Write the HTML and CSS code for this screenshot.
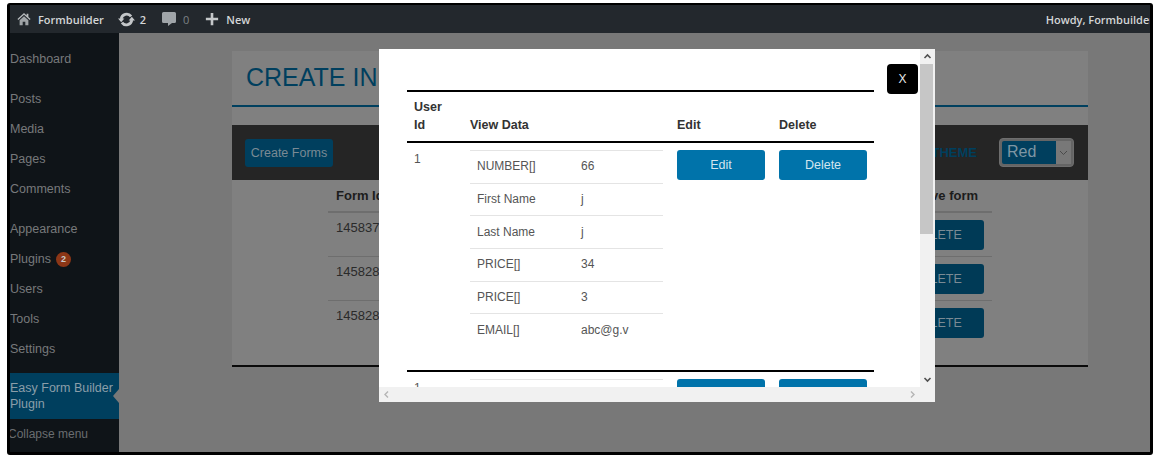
FILE: index.html
```html
<!DOCTYPE html>
<html lang="en">
<head>
    <meta charset="UTF-8">
    <title>Easy Form Builder Plugin</title>
    <link rel="stylesheet" href="styles.css">
</head>
<body>

<div class="frame">
    <div class="topbar">
        <div class="bar-item bar-site">
            <svg class="bar-icon" viewBox="0 0 16 16"><path fill="#b9bcbe" d="M8 1 0.5 8l1 1L8 3l6.500 6 1-1-2.500-2.300V2h-2v1.900z"/><path fill="#a0a4a7" d="M3 9.500 8 4.800l5 4.700V15H9.500v-4h-3v4H3z"/></svg>
            <span>Formbuilder</span>
        </div>
        <div class="bar-item bar-updates">
            <svg class="bar-icon-wide" viewBox="0 0 16 16"><path fill="none" stroke="#c4c7c9" stroke-width="2.600" d="M3 7.500a5.200 5.200 0 0 1 9.300-2.500M13 8.500a5.200 5.200 0 0 1-9.300 2.500"/><path fill="#c4c7c9" d="M0 7h6L3 10.500zM10 9h6l-3-3.500z"/></svg>
            <span>2</span>
        </div>
        <div class="bar-item bar-comments">
            <svg class="bar-icon" viewBox="0 0 14 14"><path fill="#a0a5a9" d="M1.500 0h11A1.500 1.500 0 0 1 14 1.500v8a1.500 1.500 0 0 1-1.500 1.500H10l-4 3v-3H1.500A1.500 1.500 0 0 1 0 9.500v-8A1.500 1.500 0 0 1 1.500 0z"/></svg>
            <span class="muted">0</span>
        </div>
        <div class="bar-item bar-new">
            <svg class="bar-icon" viewBox="0 0 16 16"><path fill="#c4c7c9" d="M6.500 1h3v5.500H15v3H9.500V15h-3V9.500H1v-3h5.500z"/></svg>
            <span>New</span>
        </div>
        <div class="bar-howdy">Howdy, Formbuilder</div>
    </div>

    <div class="layout">
        <div class="sidebar">
            <a class="menu-item">Dashboard</a>
            <a class="menu-item menu-gap">Posts</a>
            <a class="menu-item">Media</a>
            <a class="menu-item">Pages</a>
            <a class="menu-item">Comments</a>
            <a class="menu-item menu-gap">Appearance</a>
            <a class="menu-item">Plugins <span class="badge">2</span></a>
            <a class="menu-item">Users</a>
            <a class="menu-item">Tools</a>
            <a class="menu-item">Settings</a>
            <a class="menu-active">Easy Form Builder Plugin</a>
            <a class="menu-collapse">Collapse menu</a>
        </div>

        <div class="main">
            <div class="card">
                <h1 class="card-title">CREATE INPUT FORMS</h1>
                <div class="toolbar">
                    <button class="btn-create">Create Forms</button>
                    <span class="theme-label">THEME</span>
                    <div class="theme-select">
                        <span class="theme-value">Red</span>
                        <span class="theme-arrow">
                            <svg width="9" height="6" viewBox="0 0 9 6"><path fill="none" stroke="#4a4a4a" stroke-width="1" d="M1 1l3.500 3.500L8 1"/></svg>
                        </span>
                    </div>
                </div>
                <table class="forms">
                    <tr>
                        <th class="forms-id">Form Id</th>
                        <th class="forms-action">Remove form</th>
                    </tr>
                    <tr>
                        <td class="forms-id">1458378</td>
                        <td class="forms-action"><button class="btn-delete">DELETE</button></td>
                    </tr>
                    <tr>
                        <td class="forms-id">1458281</td>
                        <td class="forms-action"><button class="btn-delete">DELETE</button></td>
                    </tr>
                    <tr>
                        <td class="forms-id">1458280</td>
                        <td class="forms-action"><button class="btn-delete">DELETE</button></td>
                    </tr>
                </table>
            </div>
        </div>
    </div>

    <div class="modal">
        <div class="modal-view">
            <table class="entries">
                <tr>
                    <th class="col-user">User Id</th>
                    <th class="col-data">View Data</th>
                    <th class="col-btn">Edit</th>
                    <th class="col-btn">Delete</th>
                </tr>
                <tr>
                    <td class="col-user">1</td>
                    <td class="col-data">
                        <table class="fields">
                            <tr><td class="field-name">NUMBER[]</td><td>66</td></tr>
                            <tr><td class="field-name">First Name</td><td>j</td></tr>
                            <tr><td class="field-name">Last Name</td><td>j</td></tr>
                            <tr><td class="field-name">PRICE[]</td><td>34</td></tr>
                            <tr><td class="field-name">PRICE[]</td><td>3</td></tr>
                            <tr><td class="field-name">EMAIL[]</td><td>abc@g.v</td></tr>
                        </table>
                    </td>
                    <td class="col-btn"><button class="btn-row">Edit</button></td>
                    <td class="col-btn"><button class="btn-row">Delete</button></td>
                </tr>
                <tr>
                    <td class="col-user">1</td>
                    <td class="col-data">
                        <table class="fields">
                            <tr><td class="field-name">NUMBER[]</td><td>66</td></tr>
                        </table>
                    </td>
                    <td class="col-btn"><button class="btn-row">Edit</button></td>
                    <td class="col-btn"><button class="btn-row">Delete</button></td>
                </tr>
            </table>
            <button class="modal-close">X</button>
        </div>
        <div class="scroll-v">
            <svg class="scroll-arrow" width="15" height="15" viewBox="0 0 15 15"><path fill="none" stroke="#505050" stroke-width="1.600" d="M4.500 9l3-3 3 3"/></svg>
            <div class="scroll-track"><div class="scroll-thumb"></div></div>
            <svg class="scroll-arrow" width="15" height="15" viewBox="0 0 15 15"><path fill="none" stroke="#505050" stroke-width="1.600" d="M4.500 6l3 3 3-3"/></svg>
        </div>
        <div class="scroll-h">
            <svg width="15" height="15" viewBox="0 0 15 15"><path fill="none" stroke="#b4b4b4" stroke-width="1.400" d="M9 4.500l-3 3 3 3"/></svg>
            <svg width="15" height="15" viewBox="0 0 15 15"><path fill="none" stroke="#b4b4b4" stroke-width="1.400" d="M6 4.500l3 3-3 3"/></svg>
        </div>
        <div class="scroll-corner"></div>
    </div>
</div>

</body>
</html>
```

FILE: styles.css
```css
body {
    margin: 0;
    background: #fff;
    font-family: "Liberation Sans", Arial, sans-serif;
}
.frame {
    position: relative;
    box-sizing: border-box;
    width: 1146px;
    height: 452px;
    margin: 3px 0 0 7px;
    border: 3px solid #000;
    border-top-width: 2px;
    border-radius: 3px;
    overflow: hidden;
    background: #787878;
}

/* top bar */
.topbar {
    display: flex;
    align-items: center;
    height: 28px;
    padding-left: 7px;
    background: #23282d;
    color: #d4d6d7;
    font-family: "Open Sans", sans-serif;
    font-size: 11px;
    font-weight: 600;
}
.bar-item {
    display: flex;
    align-items: center;
}
.bar-icon {
    width: 14px;
    height: 14px;
    margin-right: 7px;
}
.bar-icon-wide {
    width: 17px;
    height: 17px;
    margin-right: 5px;
}
.bar-updates { margin-left: 14px; }
.bar-comments { margin-left: 16px; }
.bar-new { margin-left: 16px; }
.muted {
    color: #7d8285;
    font-weight: 400;
}
.bar-howdy {
    margin-left: auto;
    margin-right: -4px;
    white-space: nowrap;
}

/* sidebar */
.layout {
    display: flex;
    height: 419px;
}
.sidebar {
    flex: 0 0 109px;
    padding-top: 11px;
    box-sizing: border-box;
    background: #0f1418;
    color: #77797b;
    font-size: 12.5px;
}
.menu-item {
    display: flex;
    align-items: center;
    height: 30px;
}
.menu-gap { margin-top: 10px; }
.badge {
    width: 15px;
    height: 15px;
    margin-left: 5px;
    border-radius: 50%;
    background: #8c3616;
    color: #c9c9c9;
    font-size: 9px;
    font-weight: 700;
    line-height: 15px;
    text-align: center;
}
.menu-active {
    position: relative;
    display: block;
    height: 46px;
    margin-top: 9px;
    padding: 7px 0 0;
    box-sizing: border-box;
    background: #003f5e;
    color: #8b9ea9;
    line-height: 16px;
}
.menu-active::after {
    content: "";
    position: absolute;
    top: 16px;
    right: 0;
    border: 7px solid transparent;
    border-right: 6px solid #787878;
    border-left: 0;
}
.menu-collapse {
    display: block;
    margin: 8px 0 0 -2px;
    color: #6a6d70;
    font-size: 12px;
    line-height: 14px;
    white-space: nowrap;
}

/* page behind the dialog */
.main {
    flex: 1;
    min-width: 0;
    padding: 18px 62px 0 113px;
}
.card {
    height: 314px;
    background: #808080;
    border-bottom: 2px solid #0a0a0a;
}
.card-title {
    height: 43px;
    margin: 0;
    padding: 11px 14px 0;
    border-bottom: 2px solid #00405f;
    color: #003f5e;
    font-size: 25px;
    font-weight: 400;
    line-height: 30px;
    white-space: nowrap;
    overflow: hidden;
}
.toolbar {
    display: flex;
    align-items: center;
    height: 55px;
    margin-top: 18px;
    padding: 0 14px 0 13px;
    background: #252525;
}
.btn-create {
    width: 88px;
    height: 28px;
    padding: 0;
    border: 0;
    border-radius: 3px;
    background: #003f5e;
    color: #7a8a94;
    font: 12.5px "Liberation Sans", Arial, sans-serif;
}
.theme-label {
    margin-left: auto;
    margin-right: 22px;
    color: #003f5e;
    font-size: 13px;
    font-weight: 700;
}
.theme-select {
    display: flex;
    height: 23px;
    padding: 2px;
    border: 1px solid #6e6e6e;
    border-radius: 4px;
    background: #656565;
}
.theme-value {
    width: 54px;
    padding-left: 5px;
    box-sizing: border-box;
    border-radius: 2px 0 0 2px;
    background: #003f5e;
    color: #7e96a4;
    font-size: 16px;
    line-height: 21px;
}
.theme-arrow {
    display: flex;
    align-items: center;
    justify-content: center;
    width: 15px;
    background: #787878;
}
.forms {
    width: 664px;
    margin-left: 96px;
    border-collapse: collapse;
    color: #2a2a2a;
    font-size: 13px;
}
.forms th {
    height: 31px;
    padding: 0 8px;
    border-bottom: 2px solid #6e6e6e;
    color: #1c1c1c;
    text-align: left;
    white-space: nowrap;
}
.forms th.forms-action {
    padding-left: 15px;
}
.forms td {
    height: 44px;
    padding: 7px 8px 0;
    box-sizing: border-box;
    border-bottom: 1px solid #6e6e6e;
    vertical-align: top;
}
.forms tr:last-child td {
    border-bottom: 0;
}
.forms-id { width: 542px; }
.btn-delete {
    display: block;
    width: 96px;
    height: 30px;
    padding: 0 0 0 3px;
    border: 0;
    border-radius: 3px;
    background: #003a56;
    color: #7a8a94;
    font: 12.5px "Liberation Sans", Arial, sans-serif;
}

/* dialog */
.modal {
    position: absolute;
    top: 44px;
    left: 369px;
    display: grid;
    grid-template-columns: 541px 15px;
    grid-template-rows: 338px 15px;
    width: 556px;
    height: 353px;
    background: #fff;
}
.modal-view {
    position: relative;
    padding: 41px 0 0 28px;
    box-sizing: border-box;
    overflow: hidden;
}
.entries {
    width: 467px;
    border-collapse: collapse;
    border-top: 2px solid #000;
    table-layout: fixed;
    color: #555;
    font-size: 12px;
}
.entries th {
    height: 51px;
    padding: 0 7px 7px;
    border-bottom: 2px solid #000;
    box-sizing: border-box;
    color: #333;
    font-size: 12.5px;
    line-height: 18px;
    text-align: left;
    vertical-align: bottom;
}
.entries td {
    padding: 7px 7px 23px;
    border-bottom: 2px solid #000;
    vertical-align: top;
}
.entries td.col-user { padding-top: 9px; }
th.col-user { width: 56px; }
th.col-data { width: 207px; }
th.col-btn { width: 102px; }
.fields {
    width: 193px;
    border-collapse: collapse;
    table-layout: fixed;
}
.entries .fields td {
    height: 32.700px;
    padding: 0 7px 1px;
    border: 0;
    border-top: 1px solid #e4e4e4;
    box-sizing: border-box;
    vertical-align: middle;
}
.entries .fields .field-name { width: 104px; }
.btn-row {
    display: block;
    width: 88px;
    height: 30px;
    border: 0;
    border-radius: 3px;
    background: #0073aa;
    color: #d4e6ef;
    font: 12.5px "Liberation Sans", Arial, sans-serif;
}
.modal-close {
    position: absolute;
    top: 15px;
    left: 508px;
    width: 31px;
    height: 30px;
    border: 0;
    border-radius: 4px;
    background: #000;
    color: #e8e8e8;
    font: 12px "Liberation Sans", Arial, sans-serif;
}

/* scrollbars */
.scroll-v {
    display: flex;
    flex-direction: column;
    background: #f1f1f1;
}
.scroll-arrow { flex: 0 0 15px; }
.scroll-track {
    flex: 1;
}
.scroll-thumb {
    width: 13px;
    height: 170px;
    background: #c6c6c6;
}
.scroll-h {
    display: flex;
    justify-content: space-between;
    background: #f1f1f1;
}
.scroll-corner {
    background: #f1f1f1;
}
```
